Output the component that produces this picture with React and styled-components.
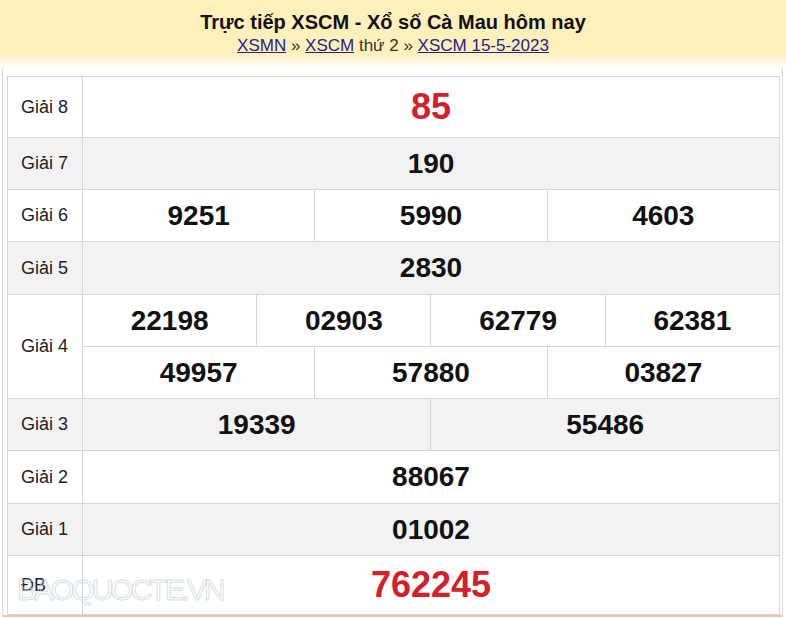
import React from "react";
import styled, { createGlobalStyle } from "styled-components";

const Global = createGlobalStyle`
  html, body { margin: 0; padding: 0; background: #fff; }
  body { font-family: "Liberation Sans", Arial, sans-serif; }
`;

const Page = styled.div`
  width: 786px;
  height: 618px;
  overflow: hidden;
`;

const Header = styled.header`
  height: 68px;
  box-sizing: border-box;
  padding-top: 10px;
  text-align: center;
  background: linear-gradient(#fdf0bb 0%, #fdf0bb 78%, #fef8e4 92%, #ffffff 100%);
`;

const Title = styled.h1`
  margin: 0;
  font-size: 20px;
  line-height: 24px;
  font-weight: bold;
  color: #111;
`;

const Crumbs = styled.div`
  font-size: 17px;
  line-height: 24px;
  color: #333;
`;

const Crumb = styled.a`
  color: #23238a;
  text-decoration: underline;
`;

const Frame = styled.div`
  position: relative;
  margin: 0 3px 0 2px;
  padding: 8px 2px 0 4px;
  border-left: 1px solid #d9d9d9;
  border-right: 1px solid #d9d9d9;
  border-bottom: 2px solid #e8c79e;
`;

const Table = styled.table`
  width: 773px;
  border-collapse: collapse;
  table-layout: fixed;
`;

const Row = styled.tr`
  height: ${(p) => p.$h}px;
  background: ${(p) => (p.$alt ? "#f2f2f2" : "#ffffff")};
`;

const Label = styled.td`
  border: 1px solid #d6d6d6;
  padding: 0 0 0 13px;
  font-size: 18px;
  color: #222;
  text-align: left;
  vertical-align: middle;
`;

const Num = styled.td`
  border: 1px solid #d6d6d6;
  padding: 0;
  text-align: center;
  vertical-align: middle;
  font-weight: bold;
  font-size: ${(p) => (p.$big ? 36 : 28)}px;
  color: ${(p) => (p.$red ? "#d3202a" : "#111")};
  line-height: 1;
`;

const Watermark = styled.div`
  position: absolute;
  left: 14px;
  bottom: 8px;
  font-size: 30px;
  letter-spacing: -3px;
  color: transparent;
  -webkit-text-stroke: 1px rgba(200, 212, 224, 0.75);
  pointer-events: none;
  font-family: "Liberation Sans", Arial, sans-serif;
`;

const rows = [
  { label: "Giải 8", nums: ["85"], h: 61, big: true, red: true },
  { label: "Giải 7", nums: ["190"], h: 52, alt: true },
  { label: "Giải 6", nums: ["9251", "5990", "4603"], h: 52 },
  { label: "Giải 5", nums: ["2830"], h: 53, alt: true },
];

const rowsAfter = [
  { label: "Giải 3", nums: ["19339", "55486"], h: 52, alt: true },
  { label: "Giải 2", nums: ["88067"], h: 53 },
  { label: "Giải 1", nums: ["01002"], h: 52, alt: true },
  { label: "ĐB", nums: ["762245"], h: 59, big: true, red: true },
];

const cells = (nums, big, red) =>
  nums.map((n, i) => (
    <Num key={i} colSpan={12 / nums.length} $big={big} $red={red}>
      {n}
    </Num>
  ));

const PrizeRow = ({ r }) => (
  <Row $h={r.h} $alt={r.alt}>
    <Label>{r.label}</Label>
    {cells(r.nums, r.big, r.red)}
  </Row>
);

export default function App() {
  return (
    <Page>
      <Global />
      <Header>
        <Title>Trực tiếp XSCM - Xổ số Cà Mau hôm nay</Title>
        <Crumbs>
          <Crumb href="#">XSMN</Crumb> » <Crumb href="#">XSCM</Crumb> thứ 2 »{" "}
          <Crumb href="#">XSCM 15-5-2023</Crumb>
        </Crumbs>
      </Header>
      <Frame>
        <Table>
          <colgroup>
            <col style={{ width: 75 }} />
            {Array.from({ length: 12 }).map((_, i) => (
              <col key={i} />
            ))}
          </colgroup>
          <tbody>
            {rows.map((r) => (
              <PrizeRow key={r.label} r={r} />
            ))}
            <Row $h={52}>
              <Label rowSpan={2}>Giải 4</Label>
              {cells(["22198", "02903", "62779", "62381"])}
            </Row>
            <Row $h={52}>{cells(["49957", "57880", "03827"])}</Row>
            {rowsAfter.map((r) => (
              <PrizeRow key={r.label} r={r} />
            ))}
          </tbody>
        </Table>
        <Watermark>BAOQUOCTE.VN</Watermark>
      </Frame>
    </Page>
  );
}
